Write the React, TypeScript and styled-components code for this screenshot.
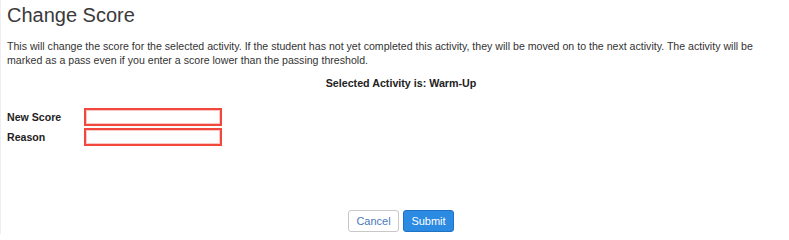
import styled, { createGlobalStyle } from "styled-components";

const GlobalStyle = createGlobalStyle`
  html, body {
    margin: 0;
    padding: 0;
    background: #fff;
  }
  body {
    font-family: "Liberation Sans", Arial, sans-serif;
    color: #333;
  }
`;

export default function App() {
  return (
    <>
      <GlobalStyle />
      <Page>
        <Title>Change Score</Title>
        <Notice>
          This will change the score for the selected activity. If the student has not yet
          completed this activity, they will be moved on to the next activity. The activity will
          be marked as a pass even if you enter a score lower than the passing threshold.
        </Notice>
        <Selected>Selected Activity is: Warm-Up</Selected>

        <Form>
          <Row>
            <Label htmlFor="newScore">New Score</Label>
            <Input id="newScore" type="text" />
          </Row>
          <Row>
            <Label htmlFor="reason">Reason</Label>
            <Input id="reason" type="text" />
          </Row>
        </Form>

        <Actions>
          <Button>Cancel</Button>
          <Button primary>Submit</Button>
        </Actions>
      </Page>
    </>
  );
}

const Page = styled.div`
  width: 789px;
  height: 234px;
  padding: 0 6px;
  box-sizing: border-box;
  border-left: 1px solid #efefef;
  overflow: hidden;
`;

const Title = styled.h2`
  margin: 4px 0 0;
  font-size: 20px;
  line-height: 22px;
  font-weight: normal;
  color: #3a3a3a;
`;

const Notice = styled.p`
  margin: 13px 0 0;
  font-size: 10.6px;
  line-height: 14px;
  color: #333;
`;

/* the centred parts sit a little right of the window's middle */
const Selected = styled.p`
  margin: 9px 0 0;
  padding-left: 12px;
  text-align: center;
  font-size: 10.7px;
  line-height: 14px;
  font-weight: bold;
  color: #222;
`;

const Form = styled.div`
  margin-top: 17px;
  display: flex;
  flex-direction: column;
`;

const Row = styled.div`
  display: flex;
  align-items: center;
  height: 20px;
`;

const Label = styled.label`
  width: 77px;
  font-size: 10.6px;
  font-weight: bold;
  color: #222;
`;

const Input = styled.input`
  width: 138px;
  height: 18px;
  box-sizing: border-box;
  border: 2px solid #f2473d;
  box-shadow: inset 0 0 0 1px rgba(242, 71, 61, 0.3);
  padding: 0 4px;
  font: inherit;
  font-size: 11px;
  outline: none;
`;

const Actions = styled.div`
  margin-top: 63px;
  padding-left: 12px;
  display: flex;
  justify-content: center;
  gap: 4px;
`;

const Button = styled.button<{ primary?: boolean }>`
  width: 51px;
  height: 22px;
  box-sizing: border-box;
  border-radius: 3px;
  font-family: "Liberation Sans", Arial, sans-serif;
  font-size: 11px;
  cursor: pointer;
  border: 1px solid ${(p) => (p.primary ? "#1f72c4" : "#c8c8c8")};
  background: ${(p) => (p.primary ? "#2b8ae2" : "#fff")};
  color: ${(p) => (p.primary ? "#fff" : "#4a78b8")};
`;
